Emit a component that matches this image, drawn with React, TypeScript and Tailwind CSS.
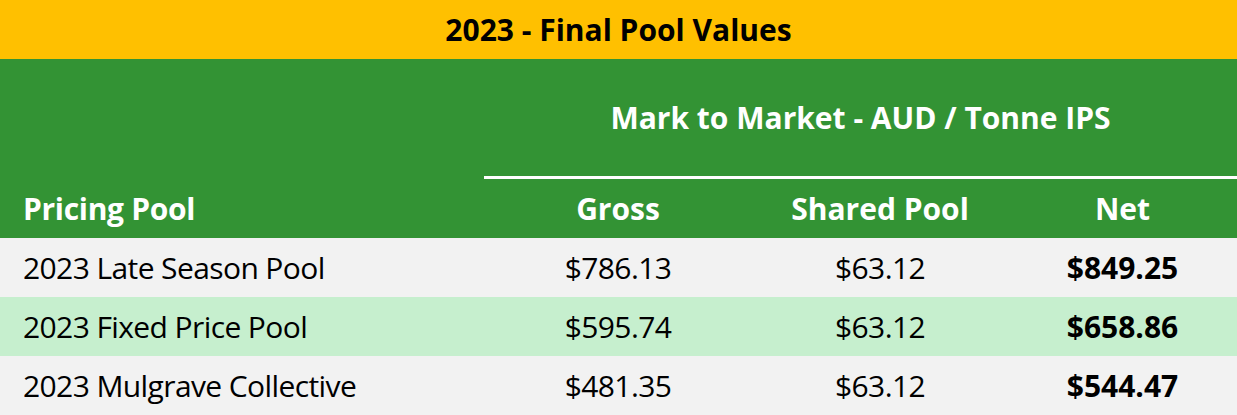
export default function App() {
  const rows = [
    { name: "2023 Late Season Pool", gross: "$786.13", shared: "$63.12", net: "$849.25", bg: "bg-[#f2f2f2]" },
    { name: "2023 Fixed Price Pool", gross: "$595.74", shared: "$63.12", net: "$658.86", bg: "bg-[#c6efce]" },
    { name: "2023 Mulgrave Collective", gross: "$481.35", shared: "$63.12", net: "$544.47", bg: "bg-[#f2f2f2]" },
  ];
  const font = { fontFamily: '"Open Sans", "Noto Sans", sans-serif' };
  return (
    <div className="w-[1237px] h-[415px] bg-white overflow-hidden text-[30px] leading-none" style={font}>
      <div className="h-[59px] bg-[#ffc000] flex items-center justify-center font-bold text-black">
        2023 - Final Pool Values
      </div>
      <div className="bg-[#339334] text-white font-bold">
        <div className="grid grid-cols-[484px_753px] h-[117px]">
          <div />
          <div className="flex items-center justify-center">Mark to Market - AUD / Tonne IPS</div>
        </div>
        <div className="grid grid-cols-[484px_753px] h-[3px]">
          <div />
          <div className="bg-white" />
        </div>
        <div className="grid grid-cols-[484px_268px_256px_229px] h-[59px] items-center">
          <div className="pl-[23px] tracking-[-0.3px]">Pricing Pool</div>
          <div className="text-center">Gross</div>
          <div className="text-center">Shared Pool</div>
          <div className="text-center">Net</div>
        </div>
      </div>
      {rows.map((r) => (
        <div key={r.name} className={`grid grid-cols-[484px_268px_256px_229px] h-[59px] items-center text-black ${r.bg}`}>
          <div className="pl-[23px] tracking-[-0.6px]">{r.name}</div>
          <div className="text-center tracking-[-0.6px]">{r.gross}</div>
          <div className="text-center tracking-[-0.6px]">{r.shared}</div>
          <div className="text-center font-bold">{r.net}</div>
        </div>
      ))}
    </div>
  );
}
